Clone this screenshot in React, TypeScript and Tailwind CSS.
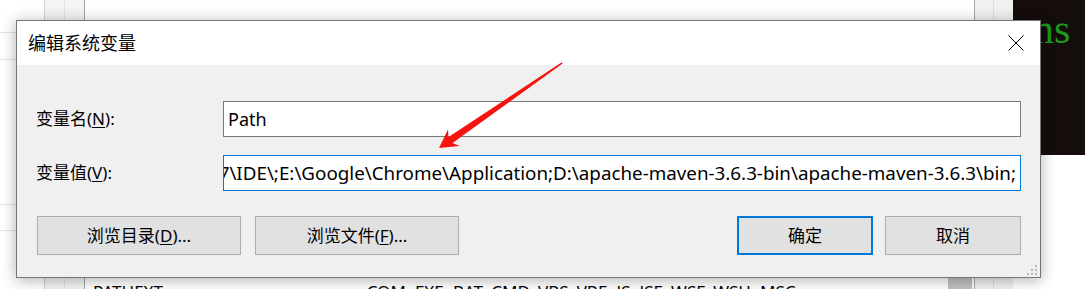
import React from "react";

const UI = { fontFamily: '"Noto Sans", "Noto Sans CJK SC", sans-serif' };

function Btn({ children, className }: { children: React.ReactNode; className: string }) {
  return (
    <div
      className={
        "flex h-[39px] items-center justify-center bg-[#e1e1e1] text-[17px] text-black " + className
      }
    >
      {children}
    </div>
  );
}

export default function App() {
  return (
    <div className="relative h-[289px] w-[1085px] overflow-hidden bg-white" style={UI}>
      {/* background window */}
      <div className="flex h-full w-full">
        <div className="flex w-[44px] flex-col">
          <div className="h-[33px] border-b border-[#e3e3e3]" />
          <div className="h-[27px] border-b border-[#e3e3e3]" />
          <div className="h-[145px] border-b border-[#e3e3e3]" />
          <div className="h-[26px] border-b border-[#e3e3e3]" />
        </div>
        <div className="w-[20px] border-l border-[#cfcfcf] bg-[#f4f4f4]" />
        <div className="w-[20px] border-l border-[#e2e2e2] bg-[#f4f4f4]" />
        <div className="flex flex-1 flex-col border-l border-[#a3a3a3]">
          <div className="flex-1" />
          <div className="flex h-[11px] items-start overflow-visible text-[17px] leading-none text-black">
            <span className="ml-[8px] mt-[5px] w-[270px]">PATHEXT</span>
            <span className="mt-[5px]">.COM;.EXE;.BAT;.CMD;.VBS;.VBE;.JS;.JSE;.WSF;.WSH;.MSC</span>
            <div className="ml-auto h-full w-[24px] bg-[#c2c2c2]" />
            <div className="w-[2px]" />
          </div>
        </div>
        <div className="w-[19px] border-l border-[#a9a9a9] bg-[#f1f1f1]" />
        <div className="w-[20px] border-l border-[#dedede] bg-[#f1f1f1]" />
        <div className="flex w-[72px] flex-col">
          <div className="h-[155px] overflow-hidden bg-[#140d0b]">
            <div
              className="ml-[20px] mt-[8px] whitespace-nowrap text-[42px] leading-none text-[#1c9a1c]"
              style={{ fontFamily: '"Liberation Serif", serif' }}
            >
              ns
            </div>
          </div>
          <div className="flex-1 bg-white" />
        </div>
      </div>

      {/* dialog */}
      <div className="absolute left-[16px] top-[20px] flex h-[258px] w-[1025px] flex-col border border-[#757575] bg-[#f0f0f0] shadow-[0_2px_14px_rgba(0,0,0,0.32)]">
        <div className="flex h-[44px] items-center justify-between bg-white pl-[11px] pr-[16px]">
          <span className="text-[18px] text-black">编辑系统变量</span>
          <svg width="16" height="16" viewBox="0 0 16 16">
            <path d="M0.5 0.5 L15.5 15.5 M15.5 0.5 L0.5 15.5" stroke="#000" strokeWidth="1" />
          </svg>
        </div>
        <div className="relative flex flex-1 flex-col pl-[19px] pr-[19px] pt-[36px]">
          <div className="flex h-[36px] items-center">
            <div className="w-[187px] text-[17px] text-black">
              变量名(<span className="underline underline-offset-2">N</span>):
            </div>
            <div className="flex h-full flex-1 items-center border border-[#7a7a7a] bg-white pl-[4px] text-[18px] text-black">
              Path
            </div>
          </div>
          <div className="mt-[18px] flex h-[36px] items-center">
            <div className="w-[187px] text-[17px] text-black">
              变量值(<span className="underline underline-offset-2">V</span>):
            </div>
            <div className="flex h-full flex-1 items-center justify-end overflow-hidden border border-[#0078d7] bg-white pr-[4px] text-[18.8px] text-black">
              <span className="whitespace-nowrap">
                C:\Program Files\Microsoft Visual Studio 12.0\Common7\IDE\;E:\Google\Chrome\Application;D:\apache-maven-3.6.3-bin\apache-maven-3.6.3\bin;
              </span>
            </div>
          </div>
          <div className="mt-[25px] flex items-center">
            <Btn className="ml-[1px] w-[204px] border border-[#adadad]">
              浏览目录(<span className="underline underline-offset-2">D</span>)...
            </Btn>
            <Btn className="ml-[14px] w-[204px] border border-[#adadad]">
              浏览文件(<span className="underline underline-offset-2">F</span>)...
            </Btn>
            <div className="flex-1" />
            <Btn className="w-[136px] border-2 border-[#0078d7]">确定</Btn>
            <Btn className="ml-[12px] w-[136px] border border-[#adadad]">取消</Btn>
          </div>
          <svg className="absolute bottom-[1px] right-[2px]" width="11" height="11" viewBox="0 0 11 11">
            <g fill="#b9b9b9">
              <rect x="8" y="0" width="2" height="2" />
              <rect x="4" y="4" width="2" height="2" />
              <rect x="8" y="4" width="2" height="2" />
              <rect x="0" y="8" width="2" height="2" />
              <rect x="4" y="8" width="2" height="2" />
              <rect x="8" y="8" width="2" height="2" />
            </g>
          </svg>
        </div>
      </div>

      {/* red annotation arrow */}
      <svg className="pointer-events-none absolute left-0 top-0" width="1085" height="289">
        <polygon
          points="562.6,63.5 452.5,142.9 459.5,145.9 439,148 448,129.5 448.5,137.1 561.8,62.3"
          fill="#f5140f"
        />
      </svg>
    </div>
  );
}
